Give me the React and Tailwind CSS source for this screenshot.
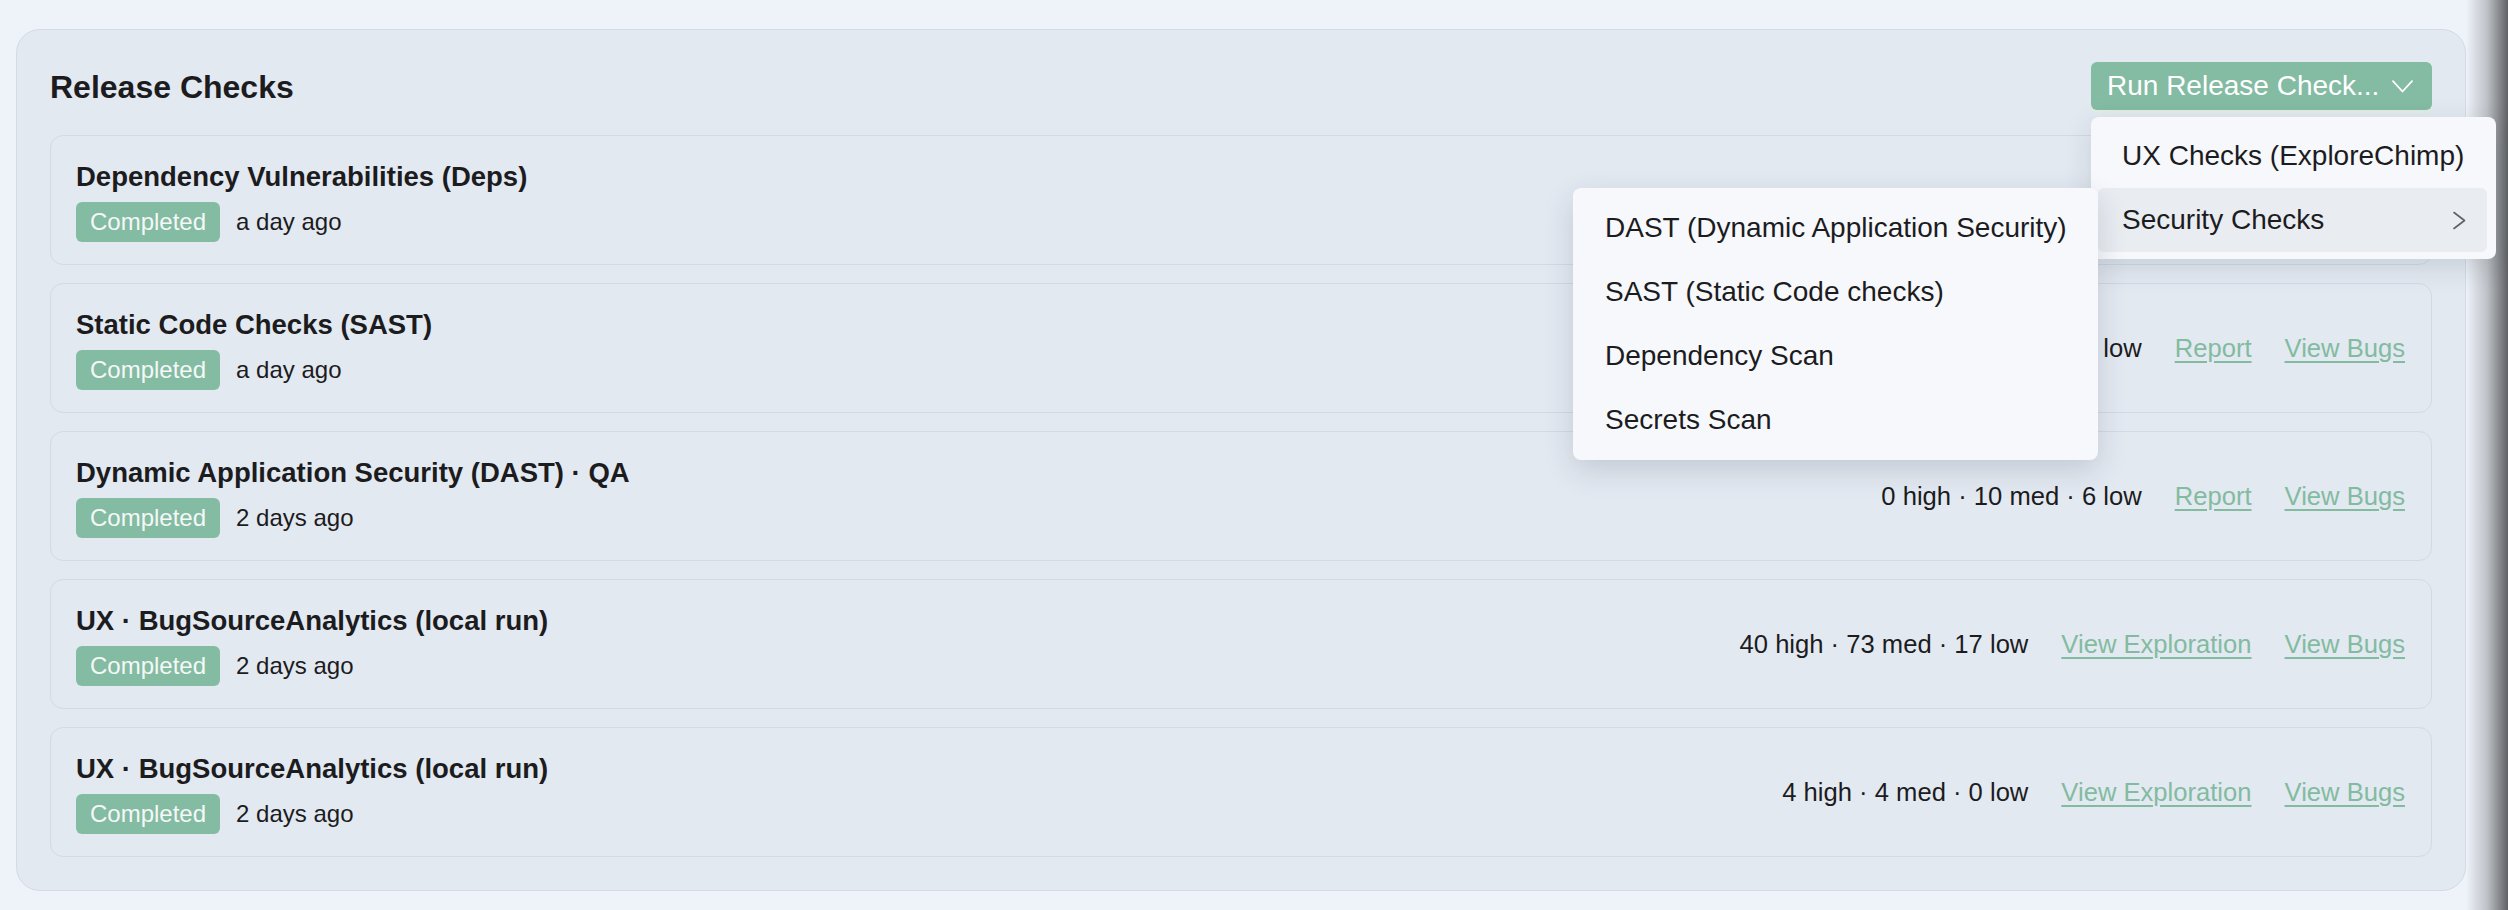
import { useState } from 'react'

const checks = [
  {
    title: 'Dependency Vulnerabilities (Deps)',
    when: 'a day ago',
    stats: '2 high · 5 med · 14 low',
    links: ['Report', 'View Bugs'],
  },
  {
    title: 'Static Code Checks (SAST)',
    when: 'a day ago',
    stats: '0 high · 2 med · 9 low',
    links: ['Report', 'View Bugs'],
  },
  {
    title: 'Dynamic Application Security (DAST) · QA',
    when: '2 days ago',
    stats: '0 high · 10 med · 6 low',
    links: ['Report', 'View Bugs'],
  },
  {
    title: 'UX · BugSourceAnalytics (local run)',
    when: '2 days ago',
    stats: '40 high · 73 med · 17 low',
    links: ['View Exploration', 'View Bugs'],
  },
  {
    title: 'UX · BugSourceAnalytics (local run)',
    when: '2 days ago',
    stats: '4 high · 4 med · 0 low',
    links: ['View Exploration', 'View Bugs'],
  },
]

const securityChecks = [
  'DAST (Dynamic Application Security)',
  'SAST (Static Code checks)',
  'Dependency Scan',
  'Secrets Scan',
]

function ChevronDown() {
  return (
    <svg width="21" height="13" viewBox="0 0 21 13" fill="none">
      <path d="M1 1.2L10.5 11.5L20 1.2" stroke="white" strokeWidth="1.8" strokeLinecap="round" strokeLinejoin="round" />
    </svg>
  )
}

function ChevronRight() {
  return (
    <svg width="15" height="19" viewBox="0 0 15 19" fill="none">
      <path d="M2 1.5L12.5 9.5L2 17.5" stroke="#5f6166" strokeWidth="1.6" strokeLinecap="round" strokeLinejoin="round" />
    </svg>
  )
}

function CheckCard({ check }) {
  return (
    <div className="flex h-[130px] items-center justify-between rounded-[13px] border border-[#d2dae5] bg-[#e3e9f1] pl-[25px] pr-[26px]">
      <div className="flex flex-col pt-[1px]">
        <div className="text-[27.5px] font-bold leading-[35px] text-[#1c1c1e]">{check.title}</div>
        <div className="mt-[8px] flex items-center">
          <span className="flex h-[40px] items-center rounded-[6px] bg-[#84bba3] px-[14px] text-[24px] text-[#f4f8f6]">
            Completed
          </span>
          <span className="ml-[16px] text-[24px] text-[#1c1c1e]">{check.when}</span>
        </div>
      </div>
      <div className="flex items-center gap-[33px] whitespace-nowrap text-[25.6px]">
        <span className="text-[#1c1c1e]">{check.stats}</span>
        {check.links.map((link) => (
          <a key={link} href="#" className="text-[#82bb9f] underline underline-offset-[4px]">
            {link}
          </a>
        ))}
      </div>
    </div>
  )
}

function RunMenu() {
  const [open] = useState(true)

  return (
    <div className="relative z-20">
      <button
        type="button"
        className="flex h-[48px] w-[341px] items-center justify-between rounded-[6px] bg-[#84bba3] pl-[16px] pr-[19px] text-[28px] text-white shadow-[0_3px_0_#e0eee6]"
      >
        <span className="whitespace-nowrap">Run Release Check...</span>
        <ChevronDown />
      </button>

      {open && (
        <div className="absolute left-0 top-[55px] w-[405px] rounded-[8px] bg-[#f6f8fc] p-[7px] pr-[9px] shadow-[0_8px_28px_rgba(30,40,60,0.14)]">
          <div className="flex h-[64px] items-center whitespace-nowrap pl-[24px] text-[28px] text-[#1c1c1e]">
            UX Checks (ExploreChimp)
          </div>
          <div className="relative flex h-[64px] items-center justify-between whitespace-nowrap rounded-[6px] bg-[#e9ecf1] pl-[24px] pr-[20px] text-[28px] text-[#1c1c1e]">
            <span>Security Checks</span>
            <ChevronRight />

            <div className="absolute right-full top-0 w-[525px] rounded-[8px] bg-[#f6f8fc] py-[8px] pl-[8px] shadow-[0_10px_30px_rgba(30,40,60,0.16)]">
              {securityChecks.map((item) => (
                <div key={item} className="flex h-[64px] items-center whitespace-nowrap px-[24px] text-[28px] text-[#1c1c1e]">
                  {item}
                </div>
              ))}
            </div>
          </div>
        </div>
      )}
    </div>
  )
}

export default function App() {
  return (
    <div
      className="relative h-[910px] w-full overflow-hidden bg-[#eef2f9] pl-[16px] pt-[29px]"
      style={{ fontFamily: '"Liberation Sans", Arial, Helvetica, sans-serif' }}
    >
      <div className="w-[2450px] rounded-[24px] border border-[#d3dbe6] bg-[#e3e9f1] px-[33px] pb-[33px] pt-[32px]">
        <div className="mb-[25px] flex h-[48px] items-center justify-between">
          <h2 className="mt-[2px] text-[32px] font-bold text-[#1c1c1e]">Release Checks</h2>
          <RunMenu />
        </div>

        <div className="flex flex-col gap-[18px]">
          {checks.map((check, i) => (
            <CheckCard key={i} check={check} />
          ))}
        </div>
      </div>

      {/* shade along the right edge of the window */}
      <div className="pointer-events-none absolute inset-y-0 right-0 z-10 w-[42px] bg-linear-to-r from-black/0 via-black/20 to-black/60" />
    </div>
  )
}
